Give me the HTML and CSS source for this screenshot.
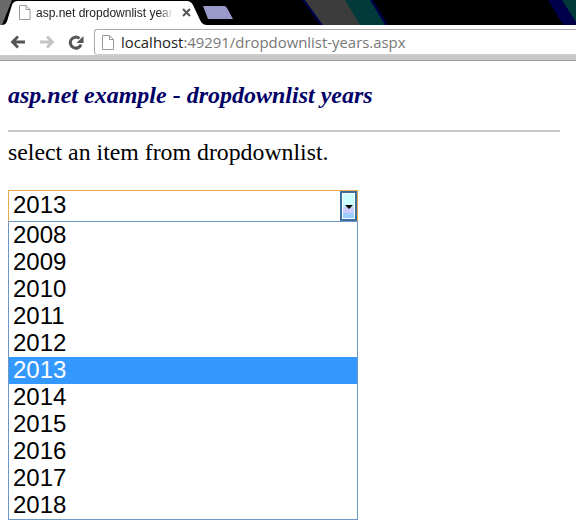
FILE: index.html
```html
<!DOCTYPE html>
<html lang="en">
<head>
    <meta charset="UTF-8">
    <meta name="viewport" content="width=device-width, initial-scale=1.0">
    <title>asp.net example - dropdownlist years</title>
    <link rel="stylesheet" href="styles.css">
</head>
<body>
    <div class="tab-strip">
        <svg class="tab-art" width="576" height="25" viewBox="0 0 576 25">
            <polygon points="0,0 12,0 2,25 0,25" fill="#6a6a6a"/>
            <polygon points="302,0 373,0 388,25 320,25" fill="#00004a"/>
            <polygon points="305,0 370,0 385,25 323,25" fill="#003a3a"/>
            <polygon points="305,0 345,0 360,25 323,25" fill="#3c3c3c"/>
            <polygon points="548,0 576,0 576,25 563,25" fill="#00004a"/>
            <polygon points="562,0 576,0 576,22" fill="#003a3a"/>
            <path d="M2 25 C6 25 7 22 8 18 L12 5 C13 2 15 1 18 1 L186 1 C190 1 191 2 193 5 L200 20 C202 24 204 25 208 25 Z" fill="#fff"/>
            <path d="M203 6 L224 6 C226 6 226 7 227 8 L233 19 L208 19 Z" fill="#9999cc"/>
        </svg>
        <svg class="tab-icon" width="13" height="15" viewBox="0 0 13 15">
            <path d="M1.5 .5 H8 L12 4.5 V14.5 H1.5 Z M8 .5 V4.5 H12" fill="#fff" stroke="#999"/>
        </svg>
        <span class="tab-title">asp.net dropdownlist year</span>
        <svg class="tab-close" width="9" height="9" viewBox="0 0 9 9">
            <path d="M1 1 L8 8 M8 1 L1 8" stroke="#555" stroke-width="2"/>
        </svg>
    </div>

    <div class="toolbar">
        <svg class="nav-icon" width="16" height="14" viewBox="0 0 16 14">
            <path d="M15 7 H3 M8 1.5 L2.5 7 L8 12.5" fill="none" stroke="#555" stroke-width="2.8"/>
        </svg>
        <svg class="nav-icon" width="16" height="14" viewBox="0 0 16 14">
            <path d="M1 7 H13 M8 1.5 L13.5 7 L8 12.5" fill="none" stroke="#c4c4c4" stroke-width="2.8"/>
        </svg>
        <svg class="nav-icon" width="16" height="15" viewBox="0 0 16 15">
            <path d="M13 9.5 A5.5 5.5 0 1 1 11.5 3.5" fill="none" stroke="#555" stroke-width="3"/>
            <polygon points="15.5,1 15.5,8 8.5,8" fill="#555"/>
        </svg>
        <div class="url-box">
            <svg width="12" height="15" viewBox="0 0 12 15">
                <path d="M.5 .5 H7.5 L11.5 4.5 V14.5 H.5 Z M7.5 .5 V4.5 H11.5" fill="#fff" stroke="#999"/>
            </svg>
            <span class="url-text"><span class="url-host">localhost</span>:49291/dropdownlist-years.aspx</span>
        </div>
    </div>
    <div class="chrome-edge"></div>

    <div class="content">
        <h3 class="heading">asp.net example - dropdownlist years</h3>
        <hr class="divider">
        <p class="intro">select an item from dropdownlist.</p>

        <div class="dropdown">
            <div class="dropdown-value">
                <span class="dropdown-text">2013</span>
                <div class="dropdown-button"><div class="dropdown-arrow"></div></div>
            </div>
            <ul class="dropdown-list">
                <li>2008</li>
                <li>2009</li>
                <li>2010</li>
                <li>2011</li>
                <li>2012</li>
                <li class="selected">2013</li>
                <li>2014</li>
                <li>2015</li>
                <li>2016</li>
                <li>2017</li>
                <li>2018</li>
            </ul>
        </div>
    </div>
</body>
</html>
```

FILE: styles.css
```css
html, body {
    margin: 0;
    padding: 0;
    height: 531px;
    overflow: hidden;
    background-color: #fff;
}
body {
    font-family: "Liberation Serif", serif;
}

/* browser frame */
.tab-strip {
    position: relative;
    height: 25px;
    background-color: #000;
    display: flex;
    align-items: center;
    overflow: hidden;
}
.tab-art {
    position: absolute;
    left: 0;
    top: 0;
}
.tab-icon {
    position: relative;
    margin-left: 18px;
}
.tab-title {
    position: relative;
    width: 137px;
    margin-left: 5px;
    overflow: hidden;
    white-space: nowrap;
    font-family: "Liberation Sans", sans-serif;
    font-size: 12px;
    color: #222;
    -webkit-mask-image: linear-gradient(to right, #000 90%, transparent);
    mask-image: linear-gradient(to right, #000 90%, transparent);
}
.tab-close {
    position: relative;
    margin-left: 9px;
}
.toolbar {
    box-sizing: border-box;
    height: 30px;
    padding-top: 4px;
    padding-left: 10px;
    display: flex;
    align-items: center;
    gap: 13px;
    background-color: #fff;
}
.url-box {
    box-sizing: border-box;
    flex: 1;
    height: 26px;
    margin-left: -3px;
    padding-left: 7px;
    display: flex;
    align-items: center;
    gap: 7px;
    border: 1px solid #aaa;
    border-bottom-color: #ccc;
    border-right: none;
    border-radius: 3px 0 0 3px;
}
.url-text {
    font-family: "Open Sans", sans-serif;
    font-size: 14.9px;
    color: #777;
    white-space: nowrap;
}
.url-host {
    color: #222;
}
.chrome-edge {
    height: 4px;
    background-color: #c8c8c8;
    border-top: 1px solid #ccc;
    border-bottom: 1px solid #999;
}

/* page */
.content {
    padding: 0 16px 0 8px;
}
.heading {
    margin: 20px 0 0;
    font-size: 24px;
    line-height: 28px;
    font-style: italic;
    font-weight: bold;
    color: #000066;
}
.divider {
    height: 2px;
    margin: 21px 0 0;
    border: none;
    background-color: #c8c8c8;
}
.intro {
    margin: 6px 0 0;
    font-size: 23.8px;
    line-height: 28px;
    color: #000;
}
.dropdown {
    width: 350px;
    margin-top: 24px;
    font-family: "Liberation Sans", sans-serif;
    font-size: 24px;
}
.dropdown-value {
    width: 344px;
    height: 30px;
    padding-left: 4px;
    display: flex;
    align-items: center;
    justify-content: space-between;
    border: 1px solid #e8a94f;
    border-bottom-color: #6f97c6;
}
.dropdown-text {
    margin-bottom: 2px;
}
.dropdown-button {
    box-sizing: content-box;
    width: 13px;
    height: 26px;
    border: 2px solid #3c6e9e;
    outline: 1px solid #fff;
    outline-offset: -3px;
    background: linear-gradient(#ccffff 0 55%, #ccccff 55% 78%, #99ccff 78%);
    display: flex;
    justify-content: center;
}
.dropdown-arrow {
    width: 0;
    height: 0;
    margin-top: 12px;
    border-left: 4px solid transparent;
    border-right: 4px solid transparent;
    border-top: 4px solid #000;
}
.dropdown-list {
    list-style: none;
    margin: 0;
    padding: 0;
    border: 1px solid #6f97c6;
    border-top: none;
}
.dropdown-list li {
    height: 27px;
    line-height: 25px;
    padding-left: 4px;
    color: #000;
}
.dropdown-list li.selected {
    background-color: #3399ff;
    color: #fff;
}
```
